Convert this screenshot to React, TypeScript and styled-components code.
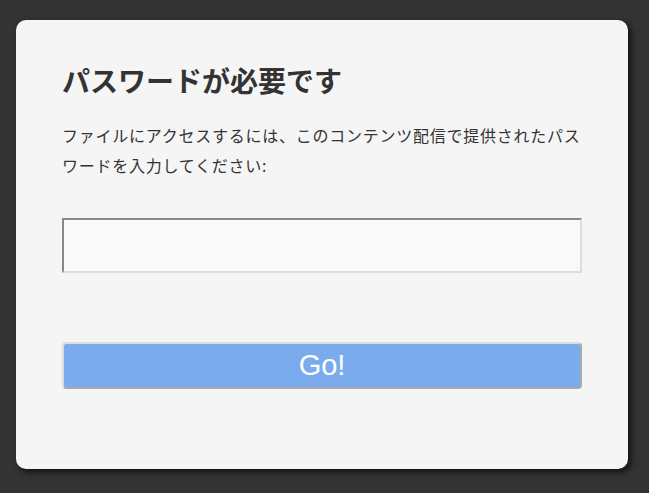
import React from 'react';
import styled, { createGlobalStyle } from 'styled-components';

const GlobalStyle = createGlobalStyle`
  html, body {
    margin: 0;
    padding: 0;
    background: #333333;
  }
  body {
    font-family: "Noto Sans CJK JP", "Liberation Sans", sans-serif;
  }
`;

const Page = styled.div`
  width: 649px;
  height: 493px;
  padding: 20px 0 0 16px;
  box-sizing: border-box;
`;

const Card = styled.div`
  width: 612px;
  height: 449px;
  box-sizing: border-box;
  padding: 43px 46px 0 46px;
  background: #f5f5f5;
  border-radius: 10px;
  box-shadow: 3px 3px 6px rgba(0, 0, 0, 0.7);
  display: flex;
  flex-direction: column;
`;

const Title = styled.h1`
  margin: 0;
  font-size: 28px;
  line-height: 34px;
  font-weight: 700;
  color: #333333;
`;

const Message = styled.p`
  margin: 23px 0 0 0;
  font-size: 16px;
  line-height: 30px;
  font-weight: 400;
  letter-spacing: 0.75px;
  color: #333333;
`;

const PasswordInput = styled.input`
  margin: 38px 0 0 0;
  width: 520px;
  height: 55px;
  box-sizing: border-box;
  padding: 0 10px;
  font-size: 20px;
  background: #f9f9f9;
  border-style: solid;
  border-width: 2px;
  border-color: #888888 #dddddd #dddddd #888888;
  outline: none;
`;

const GoButton = styled.button`
  margin: 69px 0 0 0;
  width: 520px;
  height: 47px;
  box-sizing: border-box;
  background: #7aaced;
  color: #ffffff;
  font-family: "Liberation Sans", Arial, sans-serif;
  font-size: 29px;
  line-height: 1;
  border-style: solid;
  border-width: 2px;
  border-color: #dddddd #aaaaaa #aaaaaa #dddddd;
  border-radius: 4px;
  cursor: pointer;
`;

export default function App() {
  return (
    <>
      <GlobalStyle />
      <Page>
        <Card>
          <Title>パスワードが必要です</Title>
          <Message>
            ファイルにアクセスするには、このコンテンツ配信で提供されたパスワードを入力してください:
          </Message>
          <PasswordInput type="password" />
          <GoButton>Go!</GoButton>
        </Card>
      </Page>
    </>
  );
}
